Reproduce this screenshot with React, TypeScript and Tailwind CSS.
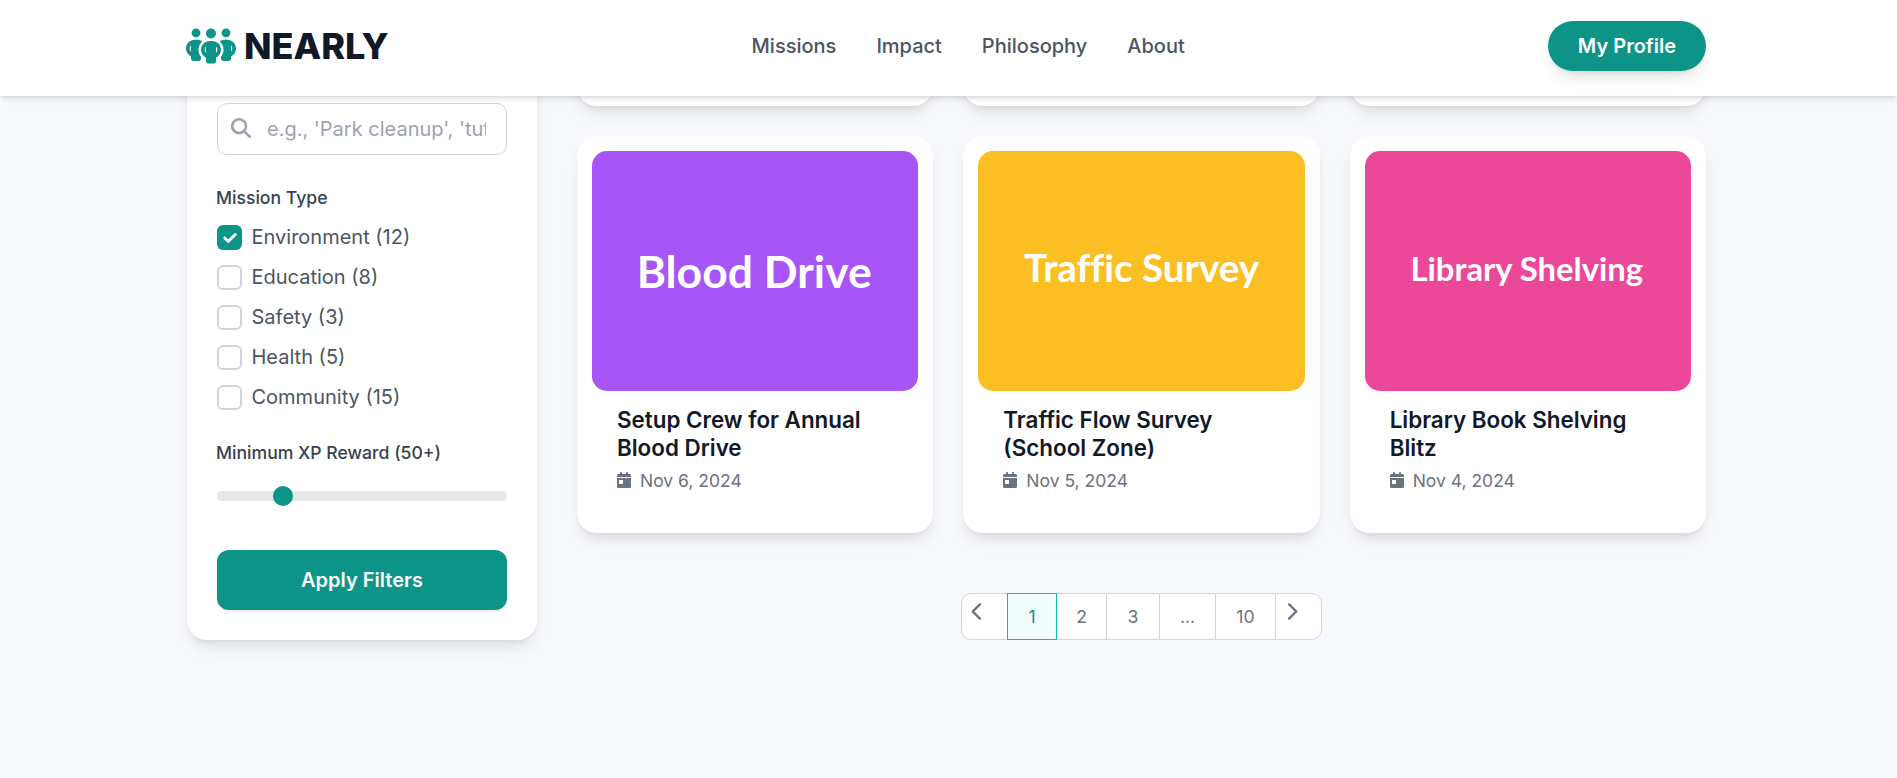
import { FaPeopleGroup, FaMagnifyingGlass, FaCheck, FaCalendarDay, FaChevronLeft, FaChevronRight } from "react-icons/fa6";

const types = [
  { name: "Environment (12)", on: true },
  { name: "Education (8)", on: false },
  { name: "Safety (3)", on: false },
  { name: "Health (5)", on: false },
  { name: "Community (15)", on: false },
];

const cards = [
  { label: "Blood Drive", bg: "bg-[#a855f7]", size: "text-[44.5px] pr-[2px]", title: "Setup Crew for Annual Blood Drive", date: "Nov 6, 2024" },
  { label: "Traffic Survey", bg: "bg-[#fbbf24]", size: "text-[38.6px] pb-[6px]", title: "Traffic Flow Survey (School Zone)", date: "Nov 5, 2024" },
  { label: "Library Shelving", bg: "bg-[#ec4899]", size: "text-[32.8px] pb-[4px] pr-[2px]", title: "Library Book Shelving Blitz", date: "Nov 4, 2024" },
];

function Card({ c }: { c: (typeof cards)[number] }) {
  return (
    <div className="bg-white rounded-[20px] shadow-lg p-[15px] h-[397px]">
      <div className={`h-[240px] rounded-[15px] flex items-center justify-center text-white font-bold [font-family:Lato,sans-serif] [font-variant-ligatures:none] ${c.bg} ${c.size}`}>
        {c.label}
      </div>
      <div className="pl-[25px] pr-[20px] pt-[15px]">
        <h3 className="text-[22.4px] leading-[28px] font-semibold text-[#111827]">{c.title}</h3>
        <div className="mt-[7px] flex items-center gap-[8px] text-[17.5px] leading-[24px] text-[#6b7280]">
          <FaCalendarDay className="text-[16px] -ml-[1px] -mt-[2px]" />
          <span>{c.date}</span>
        </div>
      </div>
    </div>
  );
}

export default function App() {
  return (
    <div className="h-screen overflow-hidden bg-[#f8f9fc] [font-family:Inter,sans-serif] pr-[4px]">
      <header className="relative z-10 h-24 bg-white shadow-md -mr-[4px] pr-[4px]">
        <div className="w-[1519px] h-full mx-auto pb-[4px] flex items-center justify-between">
          <div className="flex items-center gap-[8px] -ml-[1px]">
            <FaPeopleGroup className="text-[#0d9488] w-[50px] h-[40px]" />
            <span className="text-[36px] font-extrabold text-[#111827]">NEARLY</span>
          </div>
          <nav className="flex items-center gap-10 text-[20px] font-medium text-[#4b5563]">
            <span>Missions</span>
            <span>Impact</span>
            <span>Philosophy</span>
            <span>About</span>
          </nav>
          <button className="h-[50px] px-[30px] rounded-full bg-[#0d9488] text-white text-[20px] font-semibold shadow-lg">My Profile</button>
        </div>
      </header>

      <main className="w-[1519px] mx-auto -mt-[387px] flex items-start gap-10">
        <aside className="w-[350px] shrink-0 mt-[341px] bg-white rounded-[20px] shadow-lg px-[30px] pt-[53px] pb-[30px]">
          <div className="relative h-[52px]">
            <FaMagnifyingGlass className="absolute left-[14px] top-[15px] text-[20px] text-[#9ca3af]" />
            <input
              readOnly
              placeholder="e.g., 'Park cleanup', 'tutoring'"
              className="w-full h-full border border-[#d1d5db] rounded-[10px] pl-[49px] pr-[20px] text-[20px] placeholder:text-[#9ca3af] outline-none"
            />
          </div>
          <div className="mt-[31px] -ml-[1px] text-[17.6px] leading-[24px] font-medium text-[#374151]">Mission Type</div>
          <div className="mt-[15px] flex flex-col gap-[15px]">
            {types.map((t) => (
              <label key={t.name} className="flex items-center gap-[9.5px] h-[25px] text-[20px] text-[#4b5563]">
                {t.on ? (
                  <span className="w-[25px] h-[25px] rounded-[6px] bg-[#0d9488] flex items-center justify-center">
                    <FaCheck className="text-white text-[14px] stroke-[40]" />
                  </span>
                ) : (
                  <span className="w-[25px] h-[25px] rounded-[6px] border-2 border-[#d1d5db] bg-white" />
                )}
                <span className="-mt-[1px]">{t.name}</span>
              </label>
            ))}
          </div>
          <div className="mt-[31px] -ml-[1px] text-[17.6px] leading-[24px] font-medium text-[#374151]">Minimum XP Reward (50+)</div>
          <div className="relative mt-[26px] h-[10px] rounded-full bg-[#e5e7eb]">
            <div className="absolute left-[56px] -top-[5px] w-[20px] h-[20px] rounded-full bg-[#0d9488]" />
          </div>
          <button className="mt-[49px] w-full h-[60px] rounded-[12px] bg-[#0d9488] text-white text-[20px] font-semibold shadow-sm">Apply Filters</button>
        </aside>

        <section className="flex-1 min-w-0">
          <div className="grid grid-cols-3 gap-[30px]">
            <div className="bg-white rounded-[20px] shadow-lg h-[397px]" />
            <div className="bg-white rounded-[20px] shadow-lg h-[397px]" />
            <div className="bg-white rounded-[20px] shadow-lg h-[397px]" />
            {cards.map((c) => (
              <Card key={c.label} c={c} />
            ))}
          </div>
          <div className="mt-[60px] flex justify-center">
            <div className="flex h-[47px] border border-[#d1d5db] rounded-[10px] bg-white text-[17.6px] text-[#6b7280]">
              <div className="w-[45px] pt-[8px] pl-[6px]"><FaChevronLeft className="text-[19px]" /></div>
              <div className="w-[50px] -my-px pt-[1px] flex items-center justify-center border border-[#14b8a6] bg-[#f0fdfa] text-[#0d9488]">1</div>
              <div className="w-[50px] pt-[1px] flex items-center justify-center border-r border-[#d1d5db]">2</div>
              <div className="w-[53px] pt-[1px] flex items-center justify-center border-r border-[#d1d5db]">3</div>
              <div className="w-[56px] pt-[1px] flex items-center justify-center border-r border-[#d1d5db]">...</div>
              <div className="w-[60px] pt-[1px] flex items-center justify-center border-r border-[#d1d5db]">10</div>
              <div className="w-[45px] pt-[8px] pl-[6px]"><FaChevronRight className="text-[19px]" /></div>
            </div>
          </div>
        </section>
      </main>
    </div>
  );
}
